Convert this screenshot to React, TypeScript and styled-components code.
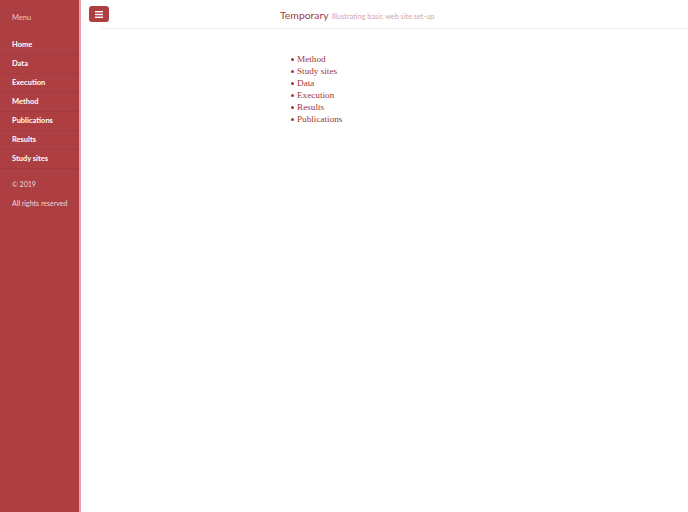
import React from 'react';
import styled, { createGlobalStyle } from 'styled-components';

const GlobalStyle = createGlobalStyle`
  html, body {
    margin: 0;
    padding: 0;
    background: #ffffff;
  }
  #root {
    min-height: 512px;
  }
`;

const Layout = styled.div`
  display: flex;
  min-height: 512px;
  font-family: Lato, 'Open Sans', sans-serif;
`;

const Sidebar = styled.nav`
  width: 79px;
  flex-shrink: 0;
  background-color: #ad3e42;
  border-right: 2px solid #e7a2b0;
  color: #ffffff;
  padding-top: 12px;
`;

const MenuLabel = styled.div`
  font-size: 7.5px;
  color: rgba(255, 255, 255, 0.72);
  padding: 0 12px;
  height: 12px;
  line-height: 12px;
  margin-bottom: 12px;
`;

const MenuList = styled.ul`
  list-style: none;
  margin: 0;
  padding: 0;
`;

const MenuItem = styled.li`
  height: 19px;
  line-height: 17px;
  padding: 0 12px;
  font-size: 7.5px;
  font-weight: 700;
  border-bottom: 1px solid rgba(0, 0, 0, 0.06);
  box-sizing: border-box;
  white-space: nowrap;
`;

const FootNote = styled.div<{ top?: number }>`
  font-size: 7px;
  color: rgba(255, 255, 255, 0.8);
  padding: 0 12px;
  line-height: 12px;
  white-space: nowrap;
  margin-top: ${(props) => props.top ?? 0}px;
`;

const Main = styled.div`
  flex: 1;
  display: flex;
  flex-direction: column;
`;

const Header = styled.header`
  height: 29px;
  box-sizing: border-box;
  padding-top: 6px;
  border-bottom: 1px solid #f0f0f0;
  margin-left: 20px;
  position: relative;
`;

const MenuButton = styled.button`
  position: absolute;
  left: -12px;
  top: 6px;
  width: 20px;
  height: 16px;
  border: none;
  border-radius: 3px;
  background-color: #ad3e42;
  padding: 0;
  display: flex;
  align-items: center;
  justify-content: center;
`;

const TitleBlock = styled.div`
  margin-left: 179px;
  white-space: nowrap;
  line-height: 13px;
`;

const Title = styled.span`
  font-size: 10.4px;
  color: #9e3a3f;
`;

const Subtitle = styled.span`
  font-size: 7.3px;
  color: #cfa6ac;
  margin-left: 3px;
`;

const Content = styled.ul`
  margin: 0;
  padding: 24px 0 0 216px;
  font-family: 'Liberation Serif', 'DejaVu Serif', serif;
  font-size: 9.2px;
  line-height: 12px;
  color: #a0393d;
  list-style: none;
`;

const ContentItem = styled.li`
  position: relative;

  &::before {
    content: '';
    position: absolute;
    left: -6px;
    top: 5px;
    width: 3px;
    height: 3px;
    border-radius: 50%;
    background: #a0393d;
  }
`;

const navItems = ['Home', 'Data', 'Execution', 'Method', 'Publications', 'Results', 'Study sites'];
const pages = ['Method', 'Study sites', 'Data', 'Execution', 'Results', 'Publications'];

const App: React.FC = () => {
  return (
    <>
      <GlobalStyle />
      <Layout>
        <Sidebar>
          <MenuLabel>Menu</MenuLabel>
          <MenuList>
            {navItems.map((item) => (
              <MenuItem key={item}>{item}</MenuItem>
            ))}
          </MenuList>
          <FootNote top={9}>© 2019</FootNote>
          <FootNote top={7}>All rights reserved</FootNote>
        </Sidebar>
        <Main>
          <Header>
            <MenuButton aria-label="menu">
              <svg width="8" height="7" viewBox="0 0 8 7">
                <rect x="0" y="0" width="8" height="1.4" fill="#fff" />
                <rect x="0" y="2.8" width="8" height="1.4" fill="#fff" />
                <rect x="0" y="5.6" width="8" height="1.4" fill="#fff" />
              </svg>
            </MenuButton>
            <TitleBlock>
              <Title>Temporary</Title>
              <Subtitle>Illustrating basic web site set-up</Subtitle>
            </TitleBlock>
          </Header>
          <Content>
            {pages.map((p) => (
              <ContentItem key={p}>{p}</ContentItem>
            ))}
          </Content>
        </Main>
      </Layout>
    </>
  );
};

export default App;
